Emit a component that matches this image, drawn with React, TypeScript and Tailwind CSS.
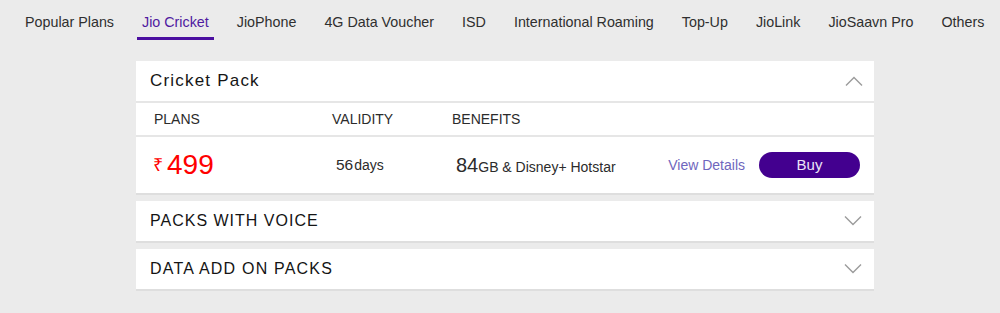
import React from "react";

const tabs = [
  "Popular Plans",
  "Jio Cricket",
  "JioPhone",
  "4G Data Voucher",
  "ISD",
  "International Roaming",
  "Top-Up",
  "JioLink",
  "JioSaavn Pro",
  "Others",
];

function Chevron({ up }: { up?: boolean }) {
  return (
    <svg width="18" height="10" viewBox="0 0 18 10" className="block">
      <path
        d={up ? "M1 9.5 L9 1.5 L17 9.5" : "M1 0.5 L9 8.5 L17 0.5"}
        fill="none"
        stroke="#9b9b9b"
        strokeWidth="1.4"
      />
    </svg>
  );
}

export default function App() {
  return (
    <div
      className="w-[1000px] h-[313px] bg-[#ebebeb] overflow-hidden"
      style={{ fontFamily: '"Liberation Sans", Arial, sans-serif' }}
    >
      <nav className="flex items-start pl-[20px] pt-[12px] gap-[18px]">
        {tabs.map((t) => {
          const active = t === "Jio Cricket";
          return (
            <div
              key={t}
              className={
                active
                  ? "px-[5px] pb-[5px] text-[14.3px] leading-[20px] text-[#4f1aa0] border-b-[3px] border-[#4b0fa0] whitespace-nowrap"
                  : "px-[5px] pb-[5px] text-[14.3px] leading-[20px] text-[#2f2f2f] border-b-[3px] border-transparent whitespace-nowrap"
              }
            >
              {t}
            </div>
          );
        })}
      </nav>

      <div className="ml-[136px] w-[738px] mt-[21px] flex flex-col gap-[6px]">
        {/* Cricket Pack */}
        <div className="bg-white border-b-2 border-[#dedede]">
          <div className="h-[42px] flex items-center justify-between pl-[14px] pr-[11px] border-b-2 border-[#e6e6e6]">
            <span className="text-[17px] tracking-[1.2px] text-[#151515]">Cricket Pack</span>
            <Chevron up />
          </div>
          <div className="h-[34px] flex items-center pl-[18px] text-[14px] text-[#2b2b2b] border-b-2 border-[#e6e6e6]">
            <span className="w-[178px]">PLANS</span>
            <span className="w-[120px]">VALIDITY</span>
            <span>BENEFITS</span>
          </div>
          <div className="h-[56px] flex items-center pl-[17px] pr-[14px]">
            <div className="w-[183px] flex items-center text-[#ff0000]">
              <span className="text-[18px] mr-[4px]">₹</span>
              <span className="text-[28px] leading-none">499</span>
            </div>
            <div className="w-[120px] flex items-baseline text-[#2b2b2b]">
              <span className="text-[15.5px]">56</span>
              <span className="text-[14px] ml-[1px]">days</span>
            </div>
            <div className="flex-1 flex items-baseline text-[#2b2b2b]">
              <span className="text-[20px]">84</span>
              <span className="text-[14px]">GB &amp; Disney+ Hotstar</span>
            </div>
            <span className="text-[14px] text-[#6f66bd] mr-[14px]">View Details</span>
            <button className="w-[101px] h-[26px] rounded-full bg-[#43008f] text-[#ece4f7] text-[15px]">
              Buy
            </button>
          </div>
        </div>

        {/* Packs with voice */}
        <div className="bg-white border-b-2 border-[#dedede] h-[42px] flex items-center justify-between pl-[14px] pr-[12px]">
          <span className="text-[16px] tracking-[1px] text-[#141414]">PACKS WITH VOICE</span>
          <Chevron />
        </div>

        {/* Data add on */}
        <div className="bg-white border-b-2 border-[#dedede] h-[42px] flex items-center justify-between pl-[14px] pr-[12px]">
          <span className="text-[16px] tracking-[1.2px] text-[#141414]">DATA ADD ON PACKS</span>
          <Chevron />
        </div>
      </div>
    </div>
  );
}
